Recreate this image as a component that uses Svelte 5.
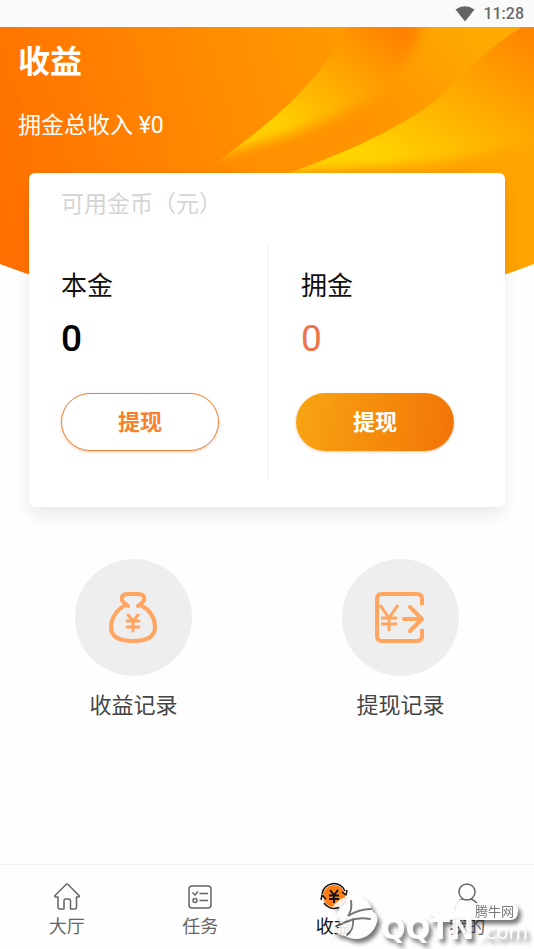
<script>
    const time = '11:28'
    const total = 0
    const accounts = [
        { name: '本金', amount: 0, kind: 'principal' },
        { name: '拥金', amount: 0, kind: 'commission' },
    ]
    const tabs = [
        { id: 'hall', label: '大厅' },
        { id: 'task', label: '任务' },
        { id: 'income', label: '收益' },
        { id: 'me', label: '我的' },
    ]
    let current = $state('income')
</script>

<div class="page">
    <div class="status-bar">
        <svg width="20" height="16" viewBox="0 0 20 16" aria-hidden="true">
            <path d="M0.5 3.6 Q10 -3 19.5 3.6 L10 15.5 Z" fill="#646464" />
        </svg>
        <span class="time">{time}</span>
    </div>

    <main>
        <svg class="backdrop" viewBox="0 0 534 262" preserveAspectRatio="none" aria-hidden="true">
            <defs>
                <linearGradient id="base" gradientUnits="userSpaceOnUse" x1="0" y1="210" x2="534" y2="70">
                    <stop offset="0" stop-color="#ff6f00" />
                    <stop offset="0.5" stop-color="#ff8f00" />
                    <stop offset="0.8" stop-color="#ffa000" />
                    <stop offset="1" stop-color="#ffa600" />
                </linearGradient>
                <linearGradient id="leaf-a" gradientUnits="userSpaceOnUse" x1="282" y1="98" x2="372" y2="-14">
                    <stop offset="0" stop-color="#ffd000" />
                    <stop offset="0.45" stop-color="#ffab00" />
                    <stop offset="0.75" stop-color="#ff9600" />
                    <stop offset="1" stop-color="#ff8200" />
                </linearGradient>
                <linearGradient id="leaf-b" gradientUnits="userSpaceOnUse" x1="370" y1="126" x2="470" y2="-30">
                    <stop offset="0" stop-color="#ffd400" />
                    <stop offset="0.5" stop-color="#ffac00" />
                    <stop offset="1" stop-color="#ff8600" />
                </linearGradient>
                <linearGradient id="band" gradientUnits="userSpaceOnUse" x1="475" y1="0" x2="370" y2="105">
                    <stop offset="0" stop-color="#ffaa00" />
                    <stop offset="0.5" stop-color="#ff9e00" />
                    <stop offset="1" stop-color="#ff9200" />
                </linearGradient>
                <clipPath id="hill">
                    <path d="M0 0 H534 V237 Q400 288 267 288 Q134 288 0 237 Z" />
                </clipPath>
                <clipPath id="edge-a">
                    <path d="M218 134 C262 102 300 72 328 32 C336 20 342 8 346 0 H534 V262 H218 Z" />
                </clipPath>
                <clipPath id="edge-b">
                    <path d="M270 152 C350 126 405 98 440 70 C466 44 492 18 522 0 H534 V262 H270 Z" />
                </clipPath>
                <filter id="soft" x="-20%" y="-20%" width="140%" height="140%">
                    <feGaussianBlur stdDeviation="6" />
                </filter>
            </defs>
            <g clip-path="url(#hill)">
                <rect width="534" height="290" fill="url(#base)" />
                <g clip-path="url(#edge-a)">
                    <path d="M250 160 L250 140 L370 80 L420 -20 H560 V30 L440 80 Z" fill="url(#band)" filter="url(#soft)" />
                    <path d="M212 130 L310 -20 H426 C420 20 400 46 372 68 C330 94 280 112 212 130 Z" fill="url(#leaf-a)" filter="url(#soft)" />
                </g>
                <g clip-path="url(#edge-b)">
                    <path d="M275 146 L430 30 L520 -30 H570 V98 C480 142 380 138 275 146 Z" fill="url(#leaf-b)" filter="url(#soft)" />
                </g>
            </g>
        </svg>

        <header>
            <h1>收益</h1>
            <p>拥金总收入 ¥{total}</p>
        </header>

        <section class="card">
            <h2>可用金币（元）</h2>
            <div class="accounts">
                {#each accounts as account}
                    <div class="account {account.kind}">
                        <h3>{account.name}</h3>
                        <p class="amount">{account.amount}</p>
                        <button class="withdraw">提现</button>
                    </div>
                {/each}
            </div>
        </section>

        <div class="records">
            <a href="#income-records">
                <span class="circle">
                    <svg width="54" height="54" viewBox="1 0 54 54" fill="none" stroke="#ffa560" stroke-width="4" stroke-linecap="round" stroke-linejoin="round" aria-hidden="true">
                        <path d="M22 15 C17 11 15 10 16 6 Q17 3 22 3 H32 Q37 3 38 6 C39 10 37 11 32 15 M36 15 C44 19 49 27 49 36 C49 46 40 50 27 50 C14 50 5 46 5 36 C5 27 11 18 20 14" />
                        <path d="M22 24 L27 30 L32 24 M21 30 H33 M21 36 H33 M27 30 V40" stroke-width="3" />
                    </svg>
                </span>
                收益记录
            </a>
            <a href="#withdraw-records">
                <span class="circle">
                    <svg width="54" height="54" viewBox="1 0 54 54" fill="none" stroke="#ffa560" stroke-width="4" aria-hidden="true">
                        <path d="M49 14 V8 Q49 3 44 3 H9 Q4 3 4 8 V45 Q4 50 9 50 H44 Q49 50 49 45 V38" />
                        <path d="M31 28 H49 M37 16 L49 28 L37 40" stroke-linecap="round" stroke-linejoin="round" />
                        <path d="M7 14 L16 27 L25 14 M8 27 H24 M8 33 H24 M16 27 V40" stroke-width="3" />
                    </svg>
                </span>
                提现记录
            </a>
        </div>
    </main>

    <nav>
        {#each tabs as tab}
            <button class="tab" class:active={current === tab.id} onclick={() => (current = tab.id)}>
                <svg width="28" height="28" viewBox="0 0 28 28" fill="none" stroke="#666" stroke-width="1.500" stroke-linejoin="round" aria-hidden="true">
                    {#if tab.id === 'hall'}
                        <path d="M13 2.500 Q14 1.500 15 2.500 L26 13.500 Q27 15 25.500 15 H23.500 V25 Q23.500 27 21.500 27 H17.500 V19 Q17.500 17 15.500 17 H12.500 Q11 17 11 19 V27 H7 Q5 27 5 25 V15 H3 Q1 15 2 13.500 Z" />
                    {:else if tab.id === 'task'}
                        <rect x="3" y="4" width="22" height="22" rx="3" />
                        <path d="M6.500 10.500 L9 13 L12 9.500 M13.500 11.500 H22 M13.500 18.500 H22" />
                        <circle cx="9" cy="18.500" r="2" />
                    {:else if tab.id === 'income'}
                        <circle cx="14" cy="14" r="11" fill="#ff7d14" stroke="none" />
                        <path d="M2 12 A12 12 0 0 1 25 9 M26 15 A12 12 0 0 1 4 21" stroke="#111" />
                        <path d="M22 10 L26 13 L27 8 M1 18 L2 13 L6 17" stroke="#111" />
                        <path d="M10 8 L14 13 L18 8 M9 13.500 H19 M9 17 H19 M14 13 V21" stroke="#111" stroke-width="2" />
                    {:else}
                        <circle cx="14" cy="10" r="8" />
                        <path d="M2 28 C2 21 6 18 10 17 M18 17 C23 19 26 22 26 28" />
                    {/if}
                </svg>
                {tab.label}
            </button>
        {/each}

        <svg class="stamp" width="206" height="62" viewBox="0 0 206 62" aria-hidden="true">
            <g fill="#fff">
                <path d="M4 21 C12 8 30 5 39 14 C43 18 44 22 45 25 C49 27 50 31 49 35 C45 50 30 56 17 49 C11 48 7 46 4 42 C9 42 13 40 14 37 C9 34 8 27 12 21 C9 19 7 20 4 21 Z" />
                <rect x="103" y="18" width="22" height="14" rx="7" />
                <path d="M118 32 C118 22 122 17 128 14 Q134 10 140 16 H182 Q190 16 190 24 Q190 33 182 33 H124 Z" />
                <text x="53" y="52" class="brand">QQTN</text>
                <text x="151" y="52" class="domain">.com</text>
            </g>
            <path d="M23 14 C24 20 23 25 20 29 C28 24 35 22 43 22 M12 38 C22 32 32 30 42 32 M25 32 C26 39 23 45 19 48" fill="none" stroke="#666" stroke-width="2" stroke-linecap="round" />
            <text x="147" y="29" class="site">腾牛网</text>
        </svg>
    </nav>
</div>

<style>
    :global(body) {
        margin: 0;
        background: #fefefe;
    }

    .page {
        min-height: 100vh;
        display: flex;
        flex-direction: column;
        font-family: Roboto, "Noto Sans CJK SC", sans-serif;
        color: #111;
    }

    h1, h2, h3, p {
        margin: 0;
        font-weight: 400;
    }

    button {
        font-family: inherit;
        padding: 0;
        cursor: pointer;
    }

    .status-bar {
        height: 27px;
        padding: 0 10px;
        display: flex;
        align-items: center;
        justify-content: flex-end;
        gap: 8px;
        background: #fafafa;
    }

    .time {
        font-size: 16px;
        line-height: 28px;
        font-weight: 500;
        color: #6a6a6a;
    }

    main {
        position: relative;
        flex: 1;
    }

    .backdrop {
        position: absolute;
        top: 0;
        left: 0;
        width: 100%;
        height: 262px;
    }

    header {
        position: relative;
        padding: 12px 18px 30px;
        color: #fff;
    }

    h1 {
        font-size: 32px;
        line-height: 46px;
        font-weight: 700;
    }

    header p {
        margin-top: 24px;
        font-size: 23px;
        line-height: 34px;
    }

    .card {
        position: relative;
        margin: 0 29px;
        padding: 14px 0 27px;
        background: #fff;
        border-radius: 6px;
        box-shadow: 0 8px 16px rgba(0, 0, 0, 0.08);
    }

    h2 {
        padding-left: 32px;
        font-size: 23px;
        line-height: 36px;
        color: #d4d4d4;
    }

    .accounts {
        margin-top: 21px;
        display: grid;
        grid-template-columns: 1fr 1fr;
    }

    .account {
        padding: 22px 0 29px 32px;
    }

    .commission {
        padding-left: 27px;
        border-left: 2px solid #f7f7f7;
    }

    .commission h3,
    .commission .amount {
        padding-left: 5px;
    }

    h3 {
        font-size: 26px;
        line-height: 40px;
    }

    .amount {
        margin-top: 11px;
        font-size: 37px;
        line-height: 44px;
        font-weight: 500;
        color: #000;
    }

    .commission .amount {
        font-weight: 400;
        color: #ee724c;
    }

    .withdraw {
        display: block;
        width: 158px;
        height: 58px;
        margin-top: 32px;
        padding-bottom: 4px;
        border: 1px solid #f08030;
        border-radius: 29px;
        background: #fff;
        box-shadow: 0 1px 3px rgba(200, 90, 20, 0.3);
        font-size: 22px;
        font-weight: 700;
        color: #f5822a;
    }

    .commission .withdraw {
        border: none;
        background: linear-gradient(100deg, #f8a512, #f27407);
        color: #fff;
    }

    .records {
        margin-top: 52px;
        display: flex;
    }

    .records a {
        flex: 1;
        display: flex;
        flex-direction: column;
        align-items: center;
        gap: 15px;
        font-size: 22px;
        line-height: 30px;
        color: #444;
        text-decoration: none;
    }

    .circle {
        width: 117px;
        height: 117px;
        border-radius: 50%;
        display: flex;
        align-items: center;
        justify-content: center;
        background: #eee;
    }

    nav {
        position: relative;
        height: 84px;
        display: flex;
        border-top: 1px solid #f2f2f2;
    }

    .tab {
        flex: 1;
        display: flex;
        flex-direction: column;
        align-items: center;
        gap: 3px;
        padding-top: 17px;
        border: none;
        background: none;
        font-size: 18px;
        line-height: 28px;
        color: #666;
    }

    .active {
        color: #111;
    }

    .stamp {
        position: absolute;
        right: 0;
        bottom: 0;
        pointer-events: none;
        opacity: 0.88;
        filter: drop-shadow(3px 4px 2px rgba(0, 0, 0, 0.6));
    }

    .brand {
        font: 700 29px "DejaVu Sans", sans-serif;
    }

    .domain {
        font: 400 20px "DejaVu Sans", sans-serif;
    }

    .site {
        font: 400 13px "Noto Sans CJK SC", sans-serif;
        fill: #666;
    }
</style>
